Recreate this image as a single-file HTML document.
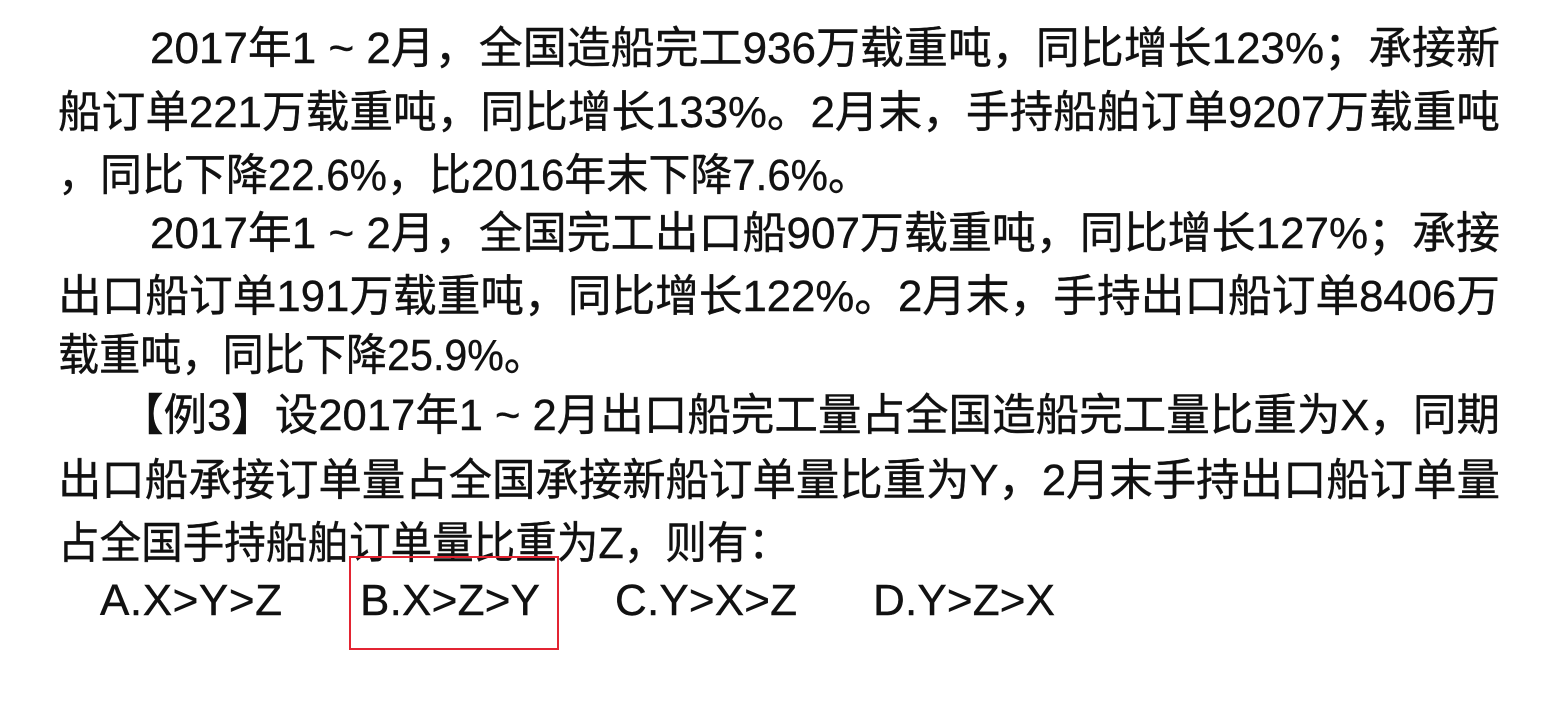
<!DOCTYPE html>
<html><head><meta charset="utf-8"><style>
html,body{margin:0;padding:0;background:#fff;width:1545px;height:722px;overflow:hidden}
svg{display:block}
text{font-family:"Liberation Sans","Noto Sans CJK SC",sans-serif;font-size:44px;fill:#111;stroke:#111;stroke-width:0.4}
</style></head><body>
<svg width="1545" height="722" xmlns="http://www.w3.org/2000/svg">
<text x="150" y="63" textLength="1350" lengthAdjust="spacingAndGlyphs">2017年1 ~ 2月，全国造船完工936万载重吨，同比增长123%；承接新</text>
<text x="58" y="127" textLength="1442" lengthAdjust="spacingAndGlyphs">船订单221万载重吨，同比增长133%。2月末，手持船舶订单9207万载重吨</text>
<text x="58" y="190" textLength="812" lengthAdjust="spacingAndGlyphs">，同比下降22.6%，比2016年末下降7.6%。</text>
<text x="150" y="248" textLength="1350" lengthAdjust="spacingAndGlyphs">2017年1 ~ 2月，全国完工出口船907万载重吨，同比增长127%；承接</text>
<text x="58" y="311" textLength="1442" lengthAdjust="spacingAndGlyphs">出口船订单191万载重吨，同比增长122%。2月末，手持出口船订单8406万</text>
<text x="58" y="370" textLength="487" lengthAdjust="spacingAndGlyphs">载重吨，同比下降25.9%。</text>
<text x="120" y="430" textLength="1380" lengthAdjust="spacingAndGlyphs">【例3】设2017年1 ~ 2月出口船完工量占全国造船完工量比重为X，同期</text>
<text x="58" y="495" textLength="1442" lengthAdjust="spacingAndGlyphs">出口船承接订单量占全国承接新船订单量比重为Y，2月末手持出口船订单量</text>
<text x="58" y="558" textLength="732" lengthAdjust="spacingAndGlyphs">占全国手持船舶订单量比重为Z，则有：</text>
<text x="100" y="615" textLength="182" lengthAdjust="spacing">A.X&gt;Y&gt;Z</text>
<text x="360" y="615" textLength="180" lengthAdjust="spacing">B.X&gt;Z&gt;Y</text>
<text x="615" y="615" textLength="182" lengthAdjust="spacing">C.Y&gt;X&gt;Z</text>
<text x="873" y="615" textLength="182" lengthAdjust="spacing">D.Y&gt;Z&gt;X</text>
<rect x="350" y="557" width="208" height="92" fill="none" stroke="#e32432" stroke-width="2"/>
</svg>
</body></html>
